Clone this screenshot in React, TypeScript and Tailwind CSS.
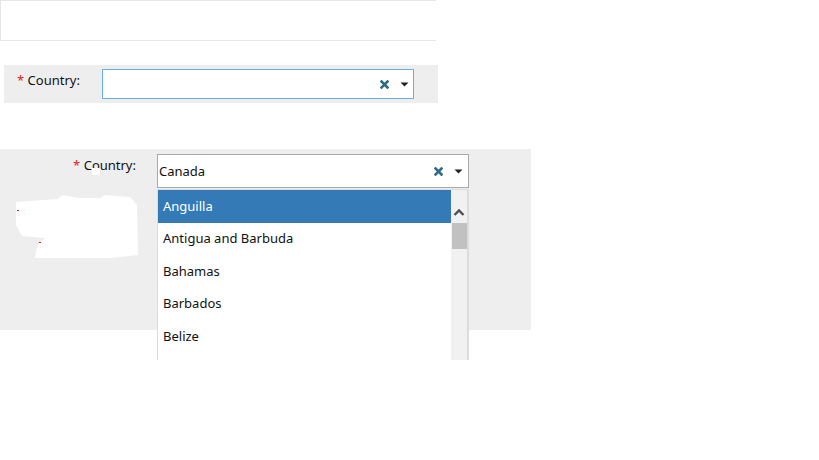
import React from "react";

const countries = ["Anguilla", "Antigua and Barbuda", "Bahamas", "Barbados", "Belize"];

function ClearIcon() {
  return (
    <svg width="9" height="9" viewBox="0 0 9 9" className="shrink-0">
      <path d="M1.5 1.5 L7.5 7.5 M7.5 1.5 L1.5 7.5" stroke="#2d6b88" strokeWidth="2.6" strokeLinecap="square" />
    </svg>
  );
}

function Caret() {
  return (
    <svg width="9" height="5" viewBox="0 0 9 5" className="shrink-0">
      <path d="M0.5 0.5 L8.5 0.5 L4.5 4.5 Z" fill="#222" />
    </svg>
  );
}

function Label() {
  return (
    <span className="text-[13px] text-[#111] whitespace-nowrap">
      <span className="text-[#e0201b]">*</span> Country:
    </span>
  );
}

export default function App() {
  return (
    <div className="min-h-screen bg-white font-['Noto_Sans','Open_Sans',sans-serif] text-[13px] text-[#111]">
      <div className="w-[436px] h-[41px] border border-r-0 border-[#e6e6e6]" />

      <div className="mt-[24px] ml-[4px] w-[434px] h-[38px] bg-[#eeeeee] flex items-start">
        <div className="w-[98px] pl-[13px] pt-[5px] leading-[20px]">
          <Label />
        </div>
        <div className="mt-[4px] w-[312px] h-[30px] bg-white border border-[#66afe9] flex items-center justify-end gap-[11px] pr-[4px]">
          <ClearIcon />
          <Caret />
        </div>
      </div>

      <div className="relative mt-[46px] w-[531px] h-[181px] bg-[#eeeeee] flex items-start">
        <div className="w-[157px] pr-[21px] pt-[6px] text-right leading-[20px]">
          <Label />
        </div>
        <div className="relative mt-[5px]">
          <div className="w-[312px] h-[34px] bg-white border border-[#a9a9a9] flex items-center pl-[1px] pr-[5px]">
            <span className="flex-1 pt-[2px]">Canada</span>
            <div className="flex items-center gap-[11px]">
              <ClearIcon />
              <Caret />
            </div>
          </div>
          <div className="absolute left-0 top-[35px] w-[312px] h-[171px] overflow-hidden bg-white border border-r-[2px] border-b-0 border-[#dcdcdc] flex">
            <ul className="flex-1">
              {countries.map((c, i) => (
                <li
                  key={c}
                  className={
                    i === 0
                      ? "h-[32.5px] flex items-center pl-[5px] bg-[#337ab7] text-white"
                      : "h-[32.5px] flex items-center pl-[5px] text-[#111]"
                  }
                >
                  {c}
                </li>
              ))}
            </ul>
            <div className="w-[16px] bg-[#f1f1f1] flex flex-col items-center">
              <svg width="16" height="33" viewBox="0 0 16 33" className="shrink-0">
                <path d="M3.5 25 L8 20.5 L12.5 25" stroke="#505050" strokeWidth="2.4" fill="none" />
              </svg>
              <div className="w-[15px] h-[26px] bg-[#c1c1c1]" />
            </div>
          </div>
        </div>

        {/* redaction scribble */}
        <svg className="absolute left-0 top-0" width="157" height="115" viewBox="0 0 157 115">
          <rect x="92" y="19" width="8" height="7" fill="#fff" />
          <polygon
            points="16,53 58,50 62,46 80,49 100,49 105,46 130,48 137,56 138,106 110,109 35,109 37,97 45,89 22,87 16,76"
            fill="#fff"
          />
          <rect x="17" y="61" width="2" height="1" fill="#e0201b" />
          <rect x="39" y="93" width="2" height="1" fill="#e0201b" />
        </svg>
      </div>
    </div>
  );
}
